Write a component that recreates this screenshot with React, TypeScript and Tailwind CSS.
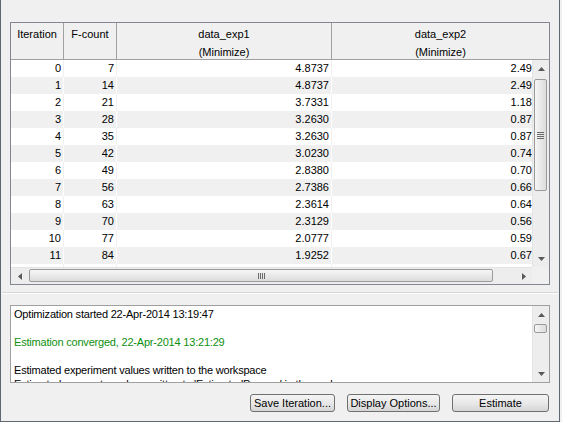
import React from 'react';

const rows: [number, number, string, string][] = [
  [0, 7, '4.8737', '2.49'],
  [1, 14, '4.8737', '2.49'],
  [2, 21, '3.7331', '1.18'],
  [3, 28, '3.2630', '0.87'],
  [4, 35, '3.2630', '0.87'],
  [5, 42, '3.0230', '0.74'],
  [6, 49, '2.8380', '0.70'],
  [7, 56, '2.7386', '0.66'],
  [8, 63, '2.3614', '0.64'],
  [9, 70, '2.3129', '0.56'],
  [10, 77, '2.0777', '0.59'],
  [11, 84, '1.9252', '0.67'],
  [12, 91, '1.8611', '0.61'],
];

function Tri({ dir }: { dir: 'up' | 'down' | 'left' | 'right' }) {
  const pts =
    dir === 'up'
      ? '0,4 3.5,0 7,4'
      : dir === 'down'
      ? '0,0 7,0 3.5,4'
      : dir === 'left'
      ? '4,0 4,7 0,3.5'
      : '0,0 0,7 4,3.5';
  const w = dir === 'up' || dir === 'down' ? 7 : 4;
  const h = dir === 'up' || dir === 'down' ? 4 : 7;
  return (
    <svg width={w} height={h} viewBox={`0 0 ${w} ${h}`}>
      <polygon points={pts} fill="#5a5a5a" />
    </svg>
  );
}

function VScroll({ thumbTop, thumbH, grip }: { thumbTop: number; thumbH: number; grip?: boolean }) {
  return (
    <div className="w-[17px] h-full flex flex-col bg-[#ededed] border-l border-[#e4e4e4]">
      <div className="h-[17px] flex items-center justify-center shrink-0">
        <Tri dir="up" />
      </div>
      <div className="flex-1 relative">
        <div
          className="absolute left-[1px] right-[2px] rounded-[2px] border border-[#9a9a9a] bg-linear-to-r from-[#f6f6f6] to-[#dcdcdc] flex items-center justify-center"
          style={{ top: thumbTop, height: thumbH }}
        >
          {grip && (
            <div className="flex flex-col gap-[1px]">
              <div className="w-[7px] h-[1px] bg-[#6a6a6a]" />
              <div className="w-[7px] h-[1px] bg-[#6a6a6a]" />
              <div className="w-[7px] h-[1px] bg-[#6a6a6a]" />
              <div className="w-[7px] h-[1px] bg-[#6a6a6a]" />
            </div>
          )}
        </div>
      </div>
      <div className="h-[17px] flex items-center justify-center shrink-0">
        <Tri dir="down" />
      </div>
    </div>
  );
}

function Button({ label, w }: { label: string; w: string }) {
  return (
    <div
      className={`${w} h-[18px] rounded-[3px] border border-[#707070] bg-linear-to-b from-[#f4f4f4] via-[#e9e9e9] to-[#d5d5d5] flex items-center justify-center text-black leading-none`}
    >
      {label}
    </div>
  );
}

export default function App() {
  return (
    <div className="w-[562px] h-[422px] bg-[#f0f0f0] font-['Liberation_Sans',Arial,sans-serif] text-[11px] text-black">
      <div className="w-[560px] h-[422px] border-l border-r border-b border-[#5e6872] flex flex-col px-[9px] pt-[22px]">
        {/* Table panel */}
        <div className="h-[263px] border border-[#828790] bg-white flex flex-col overflow-hidden">
          {/* header */}
          <div className="h-[37px] flex border-b border-[#a0a0a0] bg-[#f0f0f0] shrink-0">
            <div className="w-[53px] border-r border-[#a0a0a0] text-center pt-[2px] leading-[18px]">Iteration</div>
            <div className="w-[53px] border-r border-[#a0a0a0] text-center pt-[2px] leading-[18px]">F-count</div>
            <div className="w-[215px] border-r border-[#a0a0a0] text-center pt-[2px] leading-[18px]">
              <div>data_exp1</div>
              <div>(Minimize)</div>
            </div>
            <div className="flex-1 text-center pt-[2px] leading-[18px]">
              <div>data_exp2</div>
              <div>(Minimize)</div>
            </div>
          </div>
          {/* body */}
          <div className="h-[207px] flex shrink-0">
            <div className="flex-1 overflow-hidden">
              {rows.map((r, i) => {
                const odd = i % 2 === 1;
                const bg = odd ? 'bg-[#f0f0f0]' : 'bg-white';
                const sep = odd ? 'border-white' : 'border-[#f0f0f0]';
                return (
                  <div key={i} className={`h-[17px] flex leading-[17px] ${bg}`}>
                    <div className={`w-[53px] border-r ${sep} text-right pr-[2px]`}>{r[0]}</div>
                    <div className={`w-[53px] border-r ${sep} text-right pr-[2px]`}>{r[1]}</div>
                    <div className={`w-[215px] border-r ${sep} text-right pr-[2px]`}>{r[2]}</div>
                    <div className="flex-1 text-right">{r[3]}</div>
                  </div>
                );
              })}
            </div>
            <VScroll thumbTop={2} thumbH={112} grip />
          </div>
          {/* horizontal scrollbar */}
          <div className="h-[17px] flex shrink-0">
            <div className="flex-1 flex bg-[#ededed] border-t border-[#e4e4e4]">
              <div className="w-[17px] flex items-center justify-center">
                <Tri dir="left" />
              </div>
              <div className="flex-1 relative">
                <div className="absolute left-[1px] right-[22px] top-[1px] bottom-[2px] rounded-[2px] border border-[#9a9a9a] bg-linear-to-b from-[#f6f6f6] to-[#dcdcdc] flex items-center justify-center">
                  <div className="flex gap-[1px]">
                    <div className="w-[1px] h-[6px] bg-[#6a6a6a]" />
                    <div className="w-[1px] h-[6px] bg-[#6a6a6a]" />
                    <div className="w-[1px] h-[6px] bg-[#6a6a6a]" />
                    <div className="w-[1px] h-[6px] bg-[#6a6a6a]" />
                  </div>
                </div>
              </div>
              <div className="w-[17px] flex items-center justify-center">
                <Tri dir="right" />
              </div>
            </div>
            <div className="w-[17px] bg-[#f0f0f0]" />
          </div>
        </div>

        {/* splitter */}
        <div className="mt-[7px] h-[2px] border-t border-[#d6d6d6] border-b border-b-white shrink-0 -mx-[8px]" />

        {/* log */}
        <div className="mt-[11px] h-[78px] border border-[#a0a0a0] bg-white flex shrink-0 overflow-hidden">
          <div className="flex-1 pl-[3px] pt-[1px] leading-[14px] overflow-hidden whitespace-nowrap tracking-[-0.2px]">
            <div>Optimization started 22-Apr-2014 13:19:47</div>
            <div>&nbsp;</div>
            <div className="text-[#0f8f0f]">Estimation converged, 22-Apr-2014 13:21:29</div>
            <div>&nbsp;</div>
            <div>Estimated experiment values written to the workspace</div>
            <div>Estimated parameter values written to 'EstimatedParams' in the workspace</div>
          </div>
          <VScroll thumbTop={1} thumbH={9} />
        </div>

        {/* buttons */}
        <div className="mt-[11px] flex justify-end gap-[12px] pr-[1px]">
          <Button label="Save Iteration..." w="w-[85px]" />
          <Button label="Display Options..." w="w-[93px]" />
          <Button label="Estimate" w="w-[97px]" />
        </div>
      </div>
    </div>
  );
}
